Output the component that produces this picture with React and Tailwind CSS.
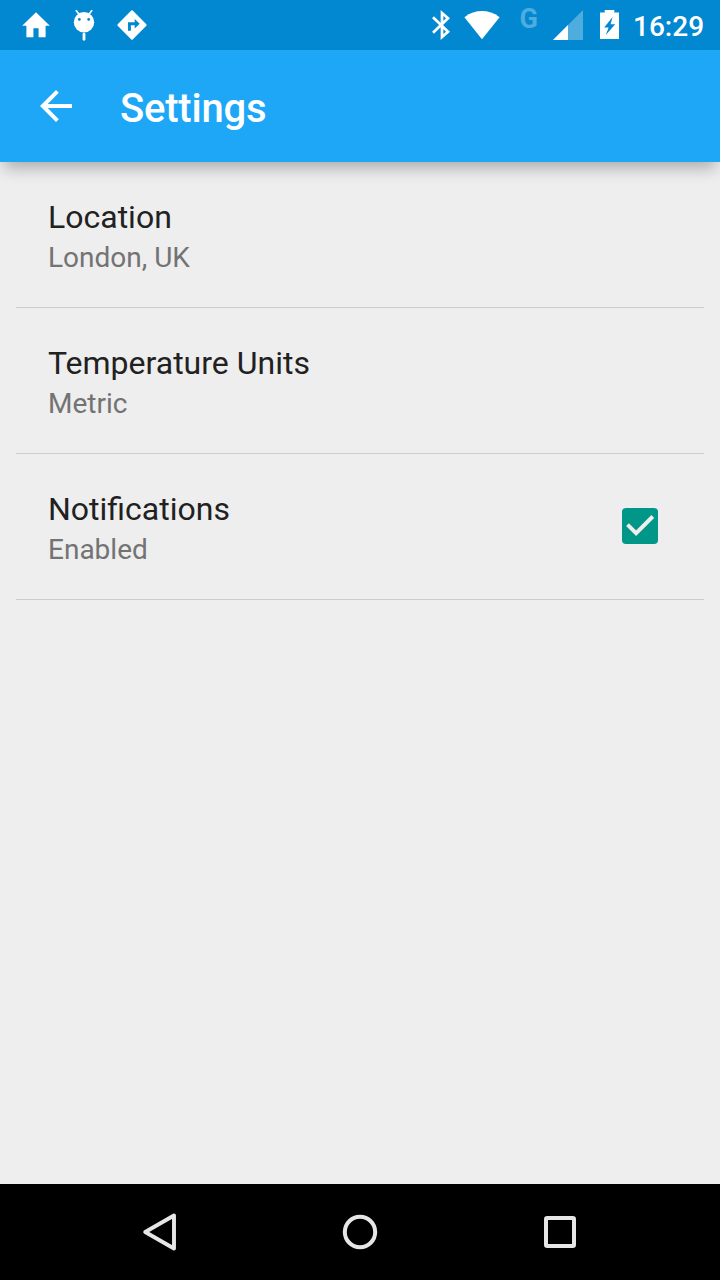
const rows = [
  { title: "Location", value: "London, UK" },
  { title: "Temperature Units", value: "Metric" },
  { title: "Notifications", value: "Enabled", checked: true },
];

function StatusBar() {
  return (
    <div className="flex h-[50px] shrink-0 bg-[#0288d1] pl-3 text-white">
      <svg className="h-[50px] w-12" viewBox="12 0 48 50" fill="currentColor">
        <path d="M36 12.2 L49.8 25.7 H45.6 V37.2 H38.6 V28.2 H33.4 V37.2 H26.4 V25.7 H22.2 Z" />
      </svg>
      <svg className="h-[50px] w-12" viewBox="60 0 48 50">
        <circle cx="84" cy="22.3" r="10.2" fill="currentColor" />
        <path d="M76.3 10.7 L79.7 15 M91.7 10.7 L88.3 15" stroke="currentColor" strokeWidth="1.7" strokeLinecap="round" />
        <path d="M84 34.2 V39.3" stroke="currentColor" strokeWidth="2.8" strokeLinecap="round" />
        <circle cx="79.3" cy="19.4" r="1.4" fill="#0288d1" />
        <circle cx="88.7" cy="19.4" r="1.4" fill="#0288d1" />
      </svg>
      <svg className="h-[50px] w-12" viewBox="108 0 48 50">
        <path d="M132 11.2 L145.6 25 L132 38.8 L118.4 25 Z" fill="currentColor" stroke="currentColor" strokeWidth="2" strokeLinejoin="round" />
        <path d="M128 30.8 V22.2 H134.7 V19 L139.7 23.8 L134.7 28.6 V25.2 H130.9 V30.8 Z" fill="#0288d1" />
      </svg>
      <div className="flex-1" />
      <svg className="h-[50px] w-[30px]" viewBox="428 0 30 50" fill="none" stroke="currentColor" strokeWidth="2.7">
        <path d="M433 17.2 L448 31.8 L442 37 V13 L448 18.2 L433 32.8" />
      </svg>
      <svg className="h-[50px] w-[50px]" viewBox="458 0 50 50" fill="currentColor">
        <path d="M464.4 17.2 C470 12.8 476 11 482 11 C488 11 494 12.8 499.6 17.2 L482 39.2 Z" />
      </svg>
      <div className="w-[45px] pt-[3px] pl-[11.5px] font-['Roboto',sans-serif] text-[27px] leading-[32px] font-bold text-[#4eacdf]">G</div>
      <svg className="h-[50px] w-[34px]" viewBox="553 0 34 50">
        <path d="M553 40 L583 10 V40 Z" fill="#4eacdf" />
        <path d="M553 40 L568 25 V40 Z" fill="currentColor" />
      </svg>
      <svg className="h-[50px] w-[46px]" viewBox="587 0 46 50">
        <path d="M600 12.5 H604.7 V10 H614.3 V12.5 H619 V39 H600 Z" fill="currentColor" />
        <path d="M612.6 17 L604.2 27.4 H608.6 L605.8 35 L615.2 24.3 H610.6 Z" fill="#0288d1" />
      </svg>
      <div className="w-[87px] pt-[2px] font-['Roboto',sans-serif] text-[28px] leading-[50px] font-medium">16:29</div>
    </div>
  );
}

function Row({ title, value, checked }) {
  return (
    <div className="mx-4 flex h-[146px] items-center justify-between border-b border-[#cdcdcd] pr-[46px] pl-8">
      <div className="pt-[5px]">
        <div className="text-[32px] leading-[38px] text-[#212121]">{title}</div>
        <div className="pt-1 text-[28px] leading-[36px] text-[#737373]">{value}</div>
      </div>
      {checked && (
        <div className="mb-[1px] size-9 rounded-[4px] bg-[#009688]">
          <svg className="size-9" viewBox="0 0 36 36" fill="none" stroke="#eee" strokeWidth="3.9">
            <path d="M5.5 16.7 L14.1 25.2 L30.8 8.5" />
          </svg>
        </div>
      )}
    </div>
  );
}

function NavigationBar() {
  return (
    <div className="flex h-24 shrink-0 items-center justify-between bg-black px-[140px]">
      <svg className="size-10" viewBox="140 1212 40 40" fill="none" stroke="#e6e6e6" strokeWidth="3.9" strokeLinejoin="round">
        <path d="M145.2 1232 L174 1215.5 V1248.5 Z" />
      </svg>
      <svg className="size-10" viewBox="340 1212 40 40" fill="none" stroke="#e6e6e6" strokeWidth="4">
        <circle cx="360" cy="1232" r="15.2" />
      </svg>
      <svg className="size-10" viewBox="540 1212 40 40" fill="none" stroke="#e6e6e6" strokeWidth="4">
        <rect x="546" y="1218" width="28" height="28" rx="1.2" />
      </svg>
    </div>
  );
}

export default function App() {
  return (
    <div className="flex h-[1280px] w-[720px] flex-col overflow-hidden bg-[#eeeeee] font-['Roboto',sans-serif]">
      <StatusBar />
      <header className="flex h-28 shrink-0 items-center bg-[#1ea7f6] pl-8 text-white shadow-[0_10px_15px_-4px_rgba(0,0,0,0.28)]">
        <svg className="size-12" viewBox="0 0 48 48" fill="currentColor">
          <path d="M40 22 H15.7 L26.8 10.8 L24 8 L8 24 L24 40 L26.8 37.2 L15.7 26 H40 Z" />
        </svg>
        <h1 className="pt-1.5 pl-10 text-[40px] leading-[48px] font-medium tracking-[-0.2px]">Settings</h1>
      </header>
      <main className="flex-1">
        {rows.map((row) => (
          <Row key={row.title} {...row} />
        ))}
      </main>
      <NavigationBar />
    </div>
  );
}
